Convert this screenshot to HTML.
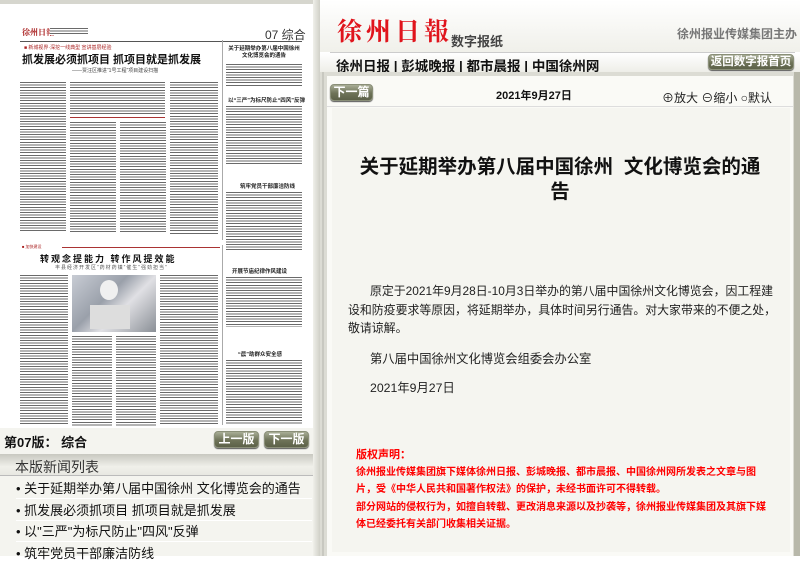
<!DOCTYPE html>
<html><head><meta charset="utf-8">
<style>
*{margin:0;padding:0;box-sizing:border-box}
body{width:800px;height:556px;overflow:hidden;background:#fff;font-family:"Liberation Sans","Noto Sans CJK SC",sans-serif;position:relative}
.a{position:absolute;white-space:nowrap}
.tx{position:absolute;background:repeating-linear-gradient(to bottom,#6a6a6a 0 1px,#fff 1px 2.6px)}
.btn{position:absolute;background:linear-gradient(#a8ad96,#6e7358 55%,#5c6148);color:#fff;font-size:12px;font-weight:bold;text-align:center;border-radius:4px;box-shadow:0 1px 1px #555;border:1px solid #8a8f78;white-space:nowrap}
.li{position:absolute;left:16px;font-size:13px;color:#111;width:296px;height:21px;line-height:21px;border-bottom:1px solid #fff;white-space:nowrap}
.red{color:#f00;font-size:10px;font-weight:bold;position:absolute;left:356px;white-space:nowrap}
</style></head><body>
<div class="a" style="left:0;top:0;width:320px;height:556px;background:#fff"></div>
<div class="a" style="left:0;top:0;width:320px;height:4px;background:#d6d6ce"></div>
<div class="a" style="left:313px;top:0;width:7px;height:556px;background:linear-gradient(90deg,#f0f0ea,#d0d0c8)"></div>
<!-- newspaper -->
<div class="a" style="left:22px;top:27px;font-size:8px;color:#a22;font-weight:bold;font-family:'Liberation Serif','Noto Serif CJK SC',serif">徐州日報</div>
<div class="tx" style="left:50px;top:28px;width:38px;height:7px"></div>
<div class="a" style="left:265px;top:26px;font-size:12px;color:#333">07 综合</div>
<div class="a" style="left:20px;top:41px;width:282px;height:1px;background:#555"></div>
<div class="a" style="left:24px;top:44px;font-size:5px;color:#a22">■ 新城视界·深挖一线典型 宣讲基层经验</div>
<div class="a" style="left:22px;top:51px;font-size:11px;font-weight:bold;color:#111">抓发展必须抓项目 抓项目就是抓发展</div>
<div class="a" style="left:72px;top:67px;font-size:5px;color:#444">——贾汪区推进“1号工程”项目建设扫描</div>
<div class="tx" style="left:20px;top:82px;width:46px;height:150px"></div>
<div class="tx" style="left:70px;top:82px;width:95px;height:33px"></div>
<div class="a" style="left:70px;top:117px;width:95px;height:1px;background:#a33"></div>
<div class="tx" style="left:70px;top:122px;width:46px;height:112px"></div>
<div class="tx" style="left:120px;top:122px;width:46px;height:112px"></div>
<div class="tx" style="left:170px;top:82px;width:48px;height:152px"></div>
<div class="a" style="left:222px;top:40px;width:1px;height:200px;background:#aaa"></div>
<div class="a" style="left:226px;top:46px;font-size:5.5px;font-weight:bold;color:#222;width:76px;text-align:center;line-height:7px;white-space:normal">关于延期举办第八届中国徐州文化博览会的通告</div>
<div class="tx" style="left:226px;top:64px;width:76px;height:22px"></div>
<div class="a" style="left:228px;top:96px;font-size:5.5px;font-weight:bold;color:#222">以“三严”为标尺防止“四风”反弹</div>
<div class="tx" style="left:226px;top:106px;width:76px;height:60px"></div>
<div class="a" style="left:240px;top:182px;font-size:5.5px;font-weight:bold;color:#222">筑牢党员干部廉洁防线</div>
<div class="tx" style="left:226px;top:192px;width:76px;height:60px"></div>
<div class="a" style="left:22px;top:244px;width:40px;font-size:4px;color:#a22">■ 加快建设</div>
<div class="a" style="left:62px;top:247px;width:158px;height:1px;background:#a33"></div>
<div class="a" style="left:40px;top:252px;font-size:9px;font-weight:bold;color:#111;letter-spacing:2px">转观念提能力 转作风提效能</div>
<div class="a" style="left:55px;top:264px;font-size:5px;color:#555;letter-spacing:1px">丰县经济开发区“药材药镇”催生“强劲担当”</div>
<div class="tx" style="left:20px;top:275px;width:48px;height:150px"></div>
<div class="a" style="left:72px;top:275px;width:84px;height:57px;background:linear-gradient(135deg,#c8ccd4,#9aa0aa 40%,#e0e0e4 60%,#8a8f96)"></div>
<div class="a" style="left:100px;top:280px;width:18px;height:20px;border-radius:50%;background:#f0f0f0"></div>
<div class="a" style="left:90px;top:305px;width:40px;height:24px;background:#ddd"></div>
<div class="tx" style="left:72px;top:336px;width:40px;height:90px"></div>
<div class="tx" style="left:116px;top:336px;width:40px;height:90px"></div>
<div class="tx" style="left:160px;top:275px;width:58px;height:150px"></div>
<div class="a" style="left:222px;top:245px;width:1px;height:180px;background:#aaa"></div>
<div class="a" style="left:232px;top:267px;font-size:5.5px;font-weight:bold;color:#222">开展节庙纪律作风建设</div>
<div class="tx" style="left:226px;top:277px;width:76px;height:50px"></div>
<div class="a" style="left:238px;top:350px;font-size:5.5px;font-weight:bold;color:#222">“晨”助群众安全感</div>
<div class="tx" style="left:226px;top:360px;width:76px;height:64px"></div>
<!-- bottom left -->
<div class="a" style="left:0;top:428px;width:313px;height:128px;background:#f4f4ef"></div>
<div class="a" style="left:4px;top:432px;font-size:13px;font-weight:bold;color:#111">第07版： 综合</div>
<div class="btn" style="left:214px;top:431px;width:45px;height:17px;line-height:15px">上一版</div>
<div class="btn" style="left:264px;top:431px;width:45px;height:17px;line-height:15px">下一版</div>
<div class="a" style="left:0;top:454px;width:313px;height:22px;background:linear-gradient(#c8c8c0,#f0f0ea 60%,#e8e8e2);border-bottom:1px solid #bbb"></div>
<div class="a" style="left:15px;top:457px;font-size:14px;color:#333">本版新闻列表</div>
<div class="li" style="top:478px">• 关于延期举办第八届中国徐州 文化博览会的通告</div>
<div class="li" style="top:500px">• 抓发展必须抓项目 抓项目就是抓发展</div>
<div class="li" style="top:521px">• 以"三严"为标尺防止"四风"反弹</div>
<div class="li" style="top:543px">• 筑牢党员干部廉洁防线</div>
<!-- right header -->
<div class="a" style="left:320px;top:0;width:480px;height:52px;background:linear-gradient(#fff,#f0f0ea)"></div>
<div class="a" style="left:337px;top:12px;font-size:25px;font-weight:bold;color:#e0141c;font-family:'Liberation Serif','Noto Serif CJK SC',serif;letter-spacing:4px">徐州日報</div>
<div class="a" style="left:451px;top:31px;font-size:13px;color:#444;font-weight:bold">数字报纸</div>
<div class="a" style="left:677px;top:25px;font-size:12px;color:#777;font-weight:bold">徐州报业传媒集团主办</div>
<div class="a" style="left:330px;top:52px;width:465px;height:1px;background:#ccc"></div>
<div class="a" style="left:320px;top:53px;width:480px;height:19px;background:linear-gradient(#fff,#eeeee8)"></div>
<div class="a" style="left:336px;top:55px;font-size:13.5px;font-weight:bold;color:#111">徐州日报 | 彭城晚报 | 都市晨报 | 中国徐州网</div>
<div class="btn" style="left:708px;top:54px;width:86px;height:16px;line-height:14px;font-size:11.5px">返回数字报首页</div>
<!-- right content -->
<div class="a" style="left:320px;top:72px;width:480px;height:484px;background:#dcdcd4"></div>
<div class="a" style="left:322px;top:72px;width:2px;height:484px;background:#c8c8c0"></div>
<div class="a" style="left:794px;top:72px;width:6px;height:484px;background:#b8b8aa"></div>
<div class="a" style="left:327px;top:76px;width:466px;height:480px;background:#fafaf6"></div>
<div class="btn" style="left:330px;top:84px;width:43px;height:17px;line-height:15px">下一篇</div>
<div class="a" style="left:496px;top:87px;font-size:11px;font-weight:bold;color:#111">2021年9月27日</div>
<div class="a" style="left:662px;top:89px;font-size:12px;color:#222">⊕放大 ⊖缩小 ○默认</div>
<div class="a" style="left:327px;top:106px;width:466px;height:1px;background:#ddd"></div>
<div class="a" style="left:332px;top:108px;width:458px;height:444px;background:#f5f5f0"></div>
<div class="a" style="left:354px;top:155px;width:412px;text-align:center;font-size:19.5px;font-weight:bold;color:#111;line-height:25px;white-space:normal">关于延期举办第八届中国徐州&nbsp;&nbsp;文化博览会的通告</div>
<div class="a" style="left:348px;top:282px;width:434px;font-size:11.9px;color:#222;line-height:18.5px;text-indent:22px;white-space:normal">原定于2021年9月28日-10月3日举办的第八届中国徐州文化博览会，因工程建设和防疫要求等原因，将延期举办，具体时间另行通告。对大家带来的不便之处，敬请谅解。</div>
<div class="a" style="left:370px;top:349px;font-size:12.3px;color:#222">第八届中国徐州文化博览会组委会办公室</div>
<div class="a" style="left:370px;top:378px;font-size:12.3px;color:#222">2021年9月27日</div>
<div class="red" style="top:446px;font-size:11px">版权声明：</div>
<div class="red" style="top:463px">徐州报业传媒集团旗下媒体徐州日报、彭城晚报、都市晨报、中国徐州网所发表之文章与图</div>
<div class="red" style="top:480px">片，受《中华人民共和国著作权法》的保护，未经书面许可不得转载。</div>
<div class="red" style="top:498px">部分网站的侵权行为，如擅自转载、更改消息来源以及抄袭等，徐州报业传媒集团及其旗下媒</div>
<div class="red" style="top:515px">体已经委托有关部门收集相关证据。</div>
</body></html>
